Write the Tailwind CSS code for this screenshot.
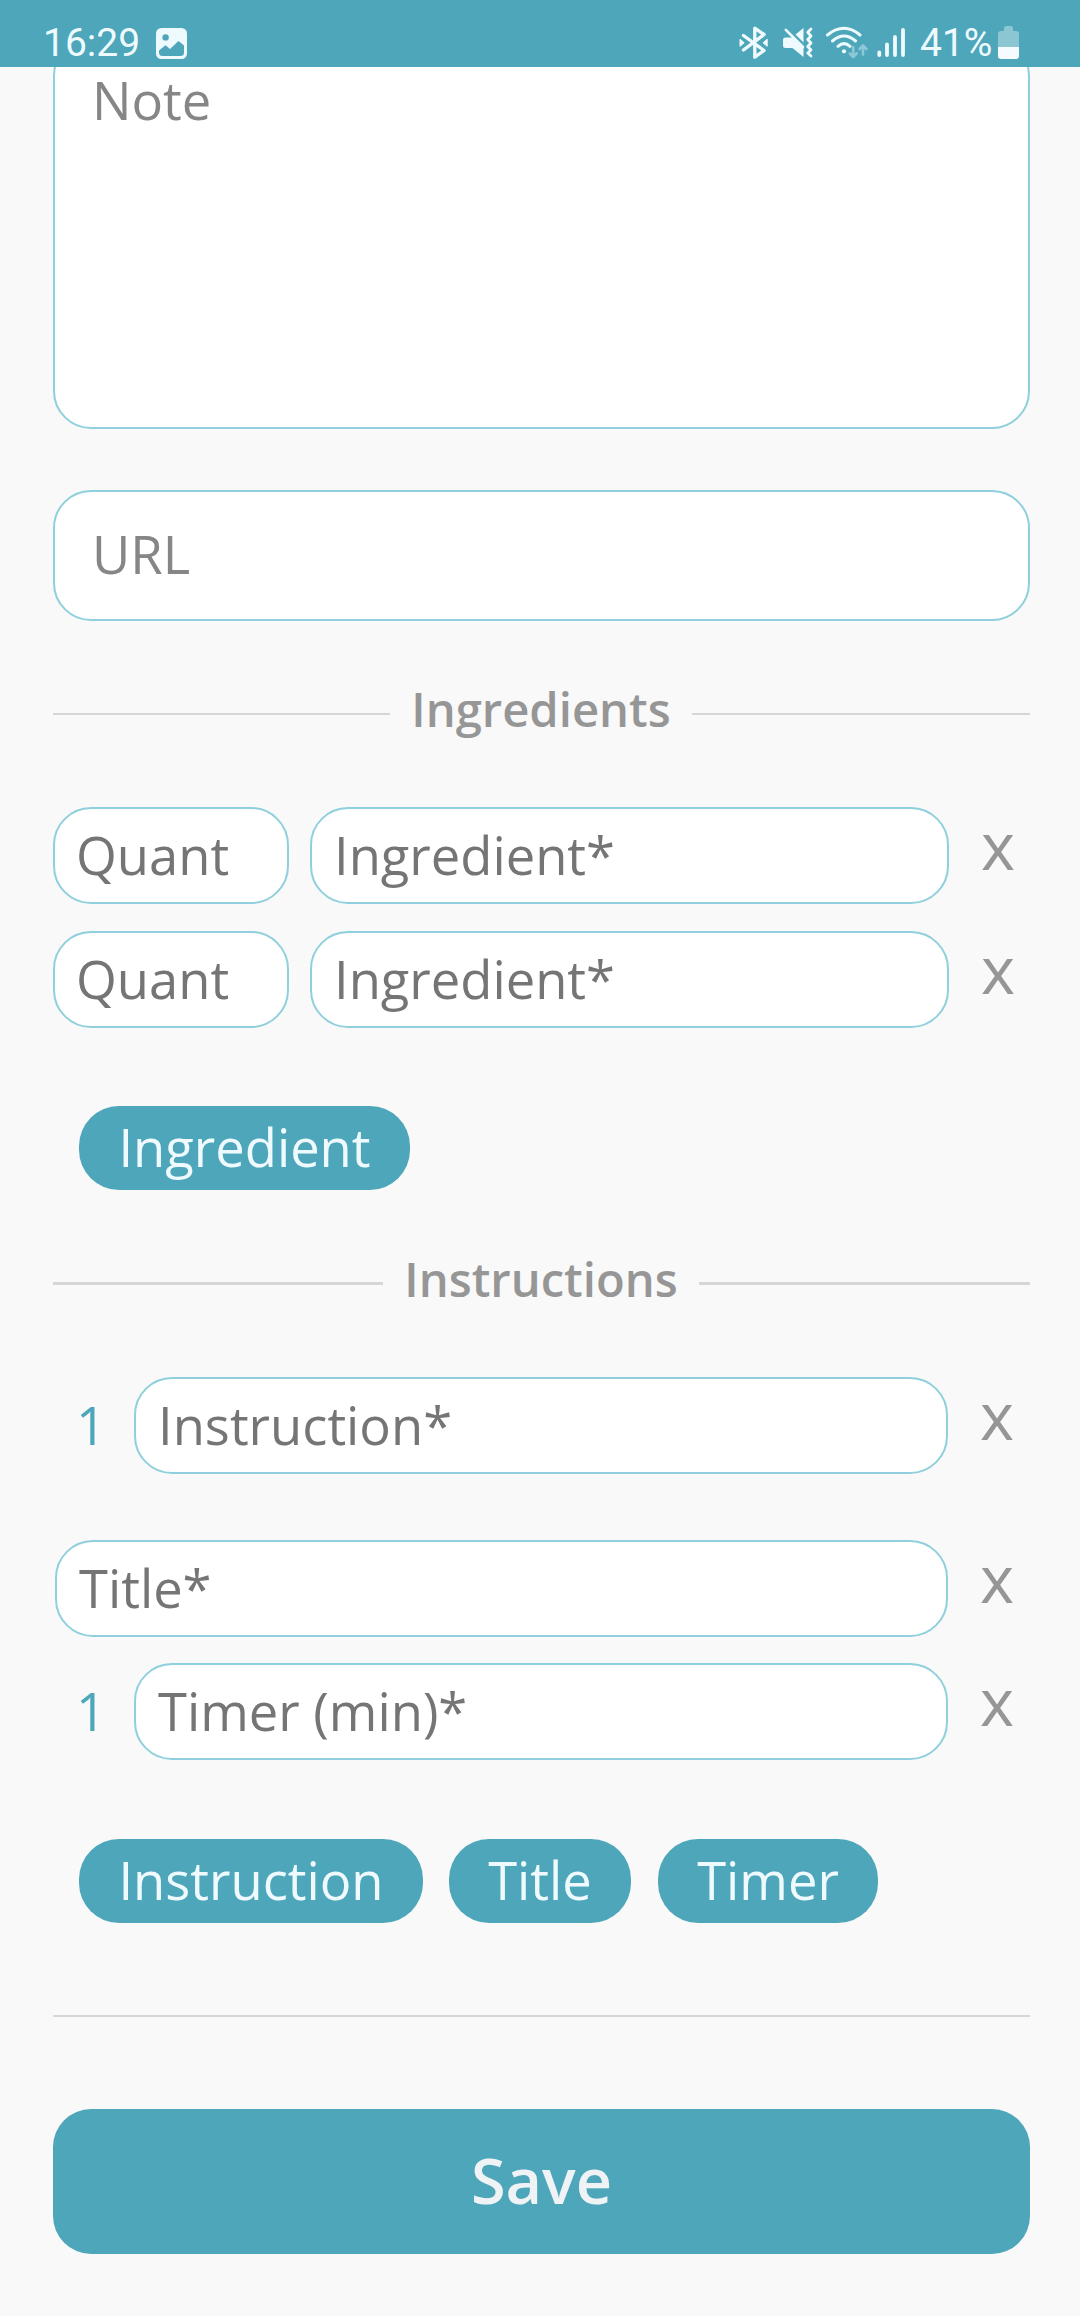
<!DOCTYPE html>
<html lang="en">
<head>
<meta charset="utf-8">
<title>Recipe</title>
<script src="https://cdn.jsdelivr.net/npm/@tailwindcss/browser@4"></script>
</head>
<body class="w-[1080px] h-[2316px] overflow-hidden bg-[#f9f9f9] font-['Open_Sans',sans-serif] text-[52.5px] leading-[72px] text-[#757575]">
<!-- status bar -->
<header class="relative z-10 flex h-[67px] bg-[#4da6b9] pl-[43px] text-[#effaff] font-[Roboto,sans-serif] text-[39px] leading-[46px]">
  <span class="mt-5 w-[113px] whitespace-nowrap">16:29</span>
  <svg class="mt-7 h-[31px] w-[31px]" viewBox="0 0 31 31"><rect width="31" height="31" rx="5.5" fill="#effaff"/><circle cx="9.6" cy="9.4" r="3.2" fill="#4da6b9"/><path d="M3 22.5L9.5 17.3L14 21L22.5 13L28 17.5V24.5Q28 28 24.5 28H6.5Q3 28 3 24.5Z" fill="#4da6b9"/></svg>
  <svg class="mt-6 ml-[551px] h-9 w-[180px]" viewBox="738 24 180 36" fill="none" stroke="#effaff">
    <!-- bluetooth -->
    <path d="M743.5 35.5L764 50.5L754.8 57.2V28.2L764 34.5L743.5 50" stroke-width="3.4" stroke-linejoin="round" stroke-linecap="round"/>
    <path d="M740 39.2L744.2 42.8L740 46.3ZM767.2 39.2L763 42.8L767.2 46.3Z" fill="#effaff" stroke-width="1" stroke-linejoin="round"/>
    <!-- muted, vibrating -->
    <path d="M785.5 37.5Q783 37.5 783 40V45.500Q783 48 785.500 48H792.500L803.500 57V47.500L793 37.500Z" fill="#effaff" stroke="none"/>
    <path d="M795.500 34.500L803.500 28V42.500Z" fill="#effaff" stroke="none"/>
    <path d="M785.800 29.800L803 47" stroke-width="2.600" stroke-linecap="round"/>
    <path d="M811 29L807.700 32.300L811 36L807.700 39.500L811 43L807.700 46.500L811 50L807.700 53L811 56" stroke-width="2.800" stroke-linejoin="round" stroke-linecap="round"/>
    <!-- wifi -->
    <g stroke-width="3" stroke-linecap="round"><path d="M827.500 35Q844 21.500 860 35M832.500 41Q844 31 855.500 41M838 46.300Q844 41 850 46.300"/></g>
    <circle cx="844" cy="51.300" r="2.100" fill="#effaff" stroke="none"/>
    <path d="M853.200 47V56.500M849.800 53.500L853.200 57L856.600 53.500M863 54.500V46M859.600 49L863 45.500L866.400 49" stroke="#8cc8d6" stroke-width="2.700" stroke-linecap="round" stroke-linejoin="round"/>
    <!-- signal -->
    <path d="M879.300 52.500V55M887 44.500V55M895 37V55M903 30V55" stroke-width="3.800" stroke-linecap="round"/>
  </svg>
  <span class="mt-5 ml-[2px] w-[78px] whitespace-nowrap">41%</span>
  <svg class="mt-[26px] h-[33px] w-[21px]" viewBox="0 0 21 33"><path d="M6 5V2Q6 0 8 0H13Q15 0 15 2V5H18Q21 5 21 8V21H0V8Q0 5 3 5Z" fill="#8cc6d3"/><path d="M0 21H21V30Q21 33 18 33H3Q0 33 0 30Z" fill="#f5fbfe"/></svg>
</header>

<main class="flex flex-col pr-[50px] pl-[53px]">
  <div class="-mt-[29px] h-[391px] rounded-[38px] border-2 border-[#90d0dc] bg-white pt-[24px] pl-[37px] text-[#868686]">Note</div>
  <div class="mt-[61px] h-[131px] rounded-[38px] border-2 border-[#90d0dc] bg-white pt-[26px] pl-[37px] text-[#868686]">URL</div>

  <div class="mt-[56px] flex h-16 items-start text-[47.2px] leading-[64px] font-semibold text-[#969696]">
    <i class="mt-[36px] h-0.5 w-[337px] bg-[#d6d6d6]"></i>
    <h2 class="w-[302px] text-center whitespace-nowrap">Ingredients</h2>
    <i class="mt-[36px] h-0.5 flex-1 bg-[#d6d6d6]"></i>
  </div>

  <div class="mt-[66px] flex h-[97px]">
    <div class="w-[236px] rounded-[38px] border-2 border-[#90d0dc] bg-white pt-[10px] pl-[21px]">Quant</div>
    <div class="ml-[21px] w-[639px] rounded-[38px] border-2 border-[#90d0dc] bg-white pt-[10px] pl-[22px]">Ingredient*</div>
    <button class="ml-8 h-[75px] w-[34px] text-[65px] text-[#969696]">x</button>
  </div>
  <div class="mt-[27px] flex h-[97px]">
    <div class="w-[236px] rounded-[38px] border-2 border-[#90d0dc] bg-white pt-[10px] pl-[21px]">Quant</div>
    <div class="ml-[21px] w-[639px] rounded-[38px] border-2 border-[#90d0dc] bg-white pt-[10px] pl-[22px]">Ingredient*</div>
    <button class="ml-8 h-[75px] w-[34px] text-[65px] text-[#969696]">x</button>
  </div>
  <button class="mt-[78px] ml-[26px] h-[84px] w-[331px] rounded-[40px] bg-[#4da6b9] pb-0.5 text-[#effaff]">Ingredient</button>

  <div class="mt-[56px] flex h-16 items-start text-[47.2px] leading-[66px] font-semibold text-[#969696]">
    <i class="mt-[36px] h-[3px] w-[330px] bg-[#d6d6d6]"></i>
    <h2 class="w-[316px] text-center whitespace-nowrap">Instructions</h2>
    <i class="mt-[36px] h-[3px] flex-1 bg-[#d6d6d6]"></i>
  </div>

  <div class="mt-[67px] flex h-[97px]">
    <span class="w-[81px] pt-[12px] pl-[23px] text-[#4da6b9]">1</span>
    <div class="w-[814px] rounded-[38px] border-2 border-[#90d0dc] bg-white pt-[10px] pl-[22px]">Instruction*</div>
    <button class="ml-8 h-[75px] w-[34px] text-[65px] text-[#969696]">x</button>
  </div>
  <div class="mt-[66px] ml-[2px] flex h-[97px]">
    <div class="w-[893px] rounded-[38px] border-2 border-[#90d0dc] bg-white pt-[10px] pl-[22px]">Title*</div>
    <button class="ml-8 h-[75px] w-[34px] text-[65px] text-[#969696]">x</button>
  </div>
  <div class="mt-[26px] flex h-[97px]">
    <span class="w-[81px] pt-[12px] pl-[23px] text-[#4da6b9]">1</span>
    <div class="w-[814px] rounded-[38px] border-2 border-[#90d0dc] bg-white pt-[10px] pl-[22px]">Timer (min)*</div>
    <button class="ml-8 h-[75px] w-[34px] text-[65px] text-[#969696]">x</button>
  </div>
  <div class="mt-[79px] ml-[26px] flex h-[84px] text-[#effaff]">
    <button class="w-[344px] rounded-[40px] bg-[#4da6b9] pb-0.5">Instruction</button>
    <button class="ml-[26px] w-[182px] rounded-[40px] bg-[#4da6b9] pb-0.5">Title</button>
    <button class="ml-[27px] w-[220px] rounded-[40px] bg-[#4da6b9] pb-0.5">Timer</button>
  </div>
  <hr class="mt-[92px] h-0.5 border-0 bg-[#d6d6d6]">
  <button class="mt-[92px] h-[145px] rounded-[38px] bg-[#4da6b9] pb-1 text-[63px] font-semibold text-[#f0f3f5]">Save</button>
</main>
</body>
</html>
